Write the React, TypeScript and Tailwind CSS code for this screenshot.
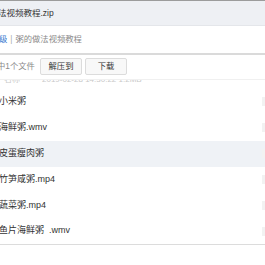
import React from "react";

const rows = [
  { name: "小米粥", hl: false },
  { name: "海鲜粥.wmv", hl: false },
  { name: "皮蛋瘦肉粥", hl: true },
  { name: "竹笋咸粥.mp4", hl: false },
  { name: "蔬菜粥.mp4", hl: false },
  { name: "鱼片海鲜粥  .wmv", hl: false },
];

export default function App() {
  return (
    <div
      className="w-[265px] h-[265px] overflow-hidden bg-white text-[#333]"
      style={{ fontFamily: '"Liberation Sans", "Noto Sans CJK SC", sans-serif' }}
    >
      <div className="h-px bg-[#9c9c9c]" />
      <div className="h-[25px] bg-[#eef0f4] border-b border-[#e4e6ea] flex items-center">
        <span className="ml-[-2px] text-[8.5px] text-[#333] whitespace-pre">法视频教程.zip</span>
      </div>
      <div className="h-[27px] flex items-center text-[8.3px] whitespace-pre">
        <span className="ml-[-1px] text-[#3b7ad0]">级</span>
        <span className="text-[#aaa] mx-[3px]">|</span>
        <span className="text-[#8a8a8a]">粥的做法视频教程</span>
      </div>
      <div className="h-[1.5px] bg-[#dadada]" />
      <div className="h-[24px] flex items-center">
        <span className="ml-[-3px] text-[8.3px] text-[#8a8a8a] w-[43px] whitespace-pre">中1个文件</span>
        <button className="w-[42px] h-[17px] ml-[0px] border border-[#dcdcdc] bg-[#f8f8f8] rounded-[2px] text-[8.3px] text-[#333] flex items-center justify-center">
          解压到
        </button>
        <button className="w-[42px] h-[17px] ml-[3px] border border-[#dcdcdc] bg-[#f8f8f8] rounded-[2px] text-[8.3px] text-[#333] flex items-center justify-center">
          下载
        </button>
      </div>
      <div className="h-[10px] border-t border-[#f0f0f0] overflow-hidden relative">
        <div className="absolute left-[4px] top-[-6px] text-[8px] text-[#c8c8c8] whitespace-pre">名称</div>
        <div className="absolute left-[42px] top-[-6px] text-[8px] text-[#c8c8c8] whitespace-pre">2019-02-28 14:30:22 1.2MB</div>
      </div>
      <div>
        {rows.map((r, i) => (
          <div
            key={i}
            className={`h-[26px] flex items-center justify-between ${r.hl ? "bg-[#eff2f6]" : ""} ${
              i === rows.length - 1 ? "border-b border-[#dcdcdc]" : ""
            }`}
          >
            <span className="ml-[-1px] text-[9px] text-[#333] whitespace-pre">{r.name}</span>
            <span className="w-[3px] h-[9px] bg-[#f2f2f2] mr-0" />
          </div>
        ))}
      </div>
    </div>
  );
}
